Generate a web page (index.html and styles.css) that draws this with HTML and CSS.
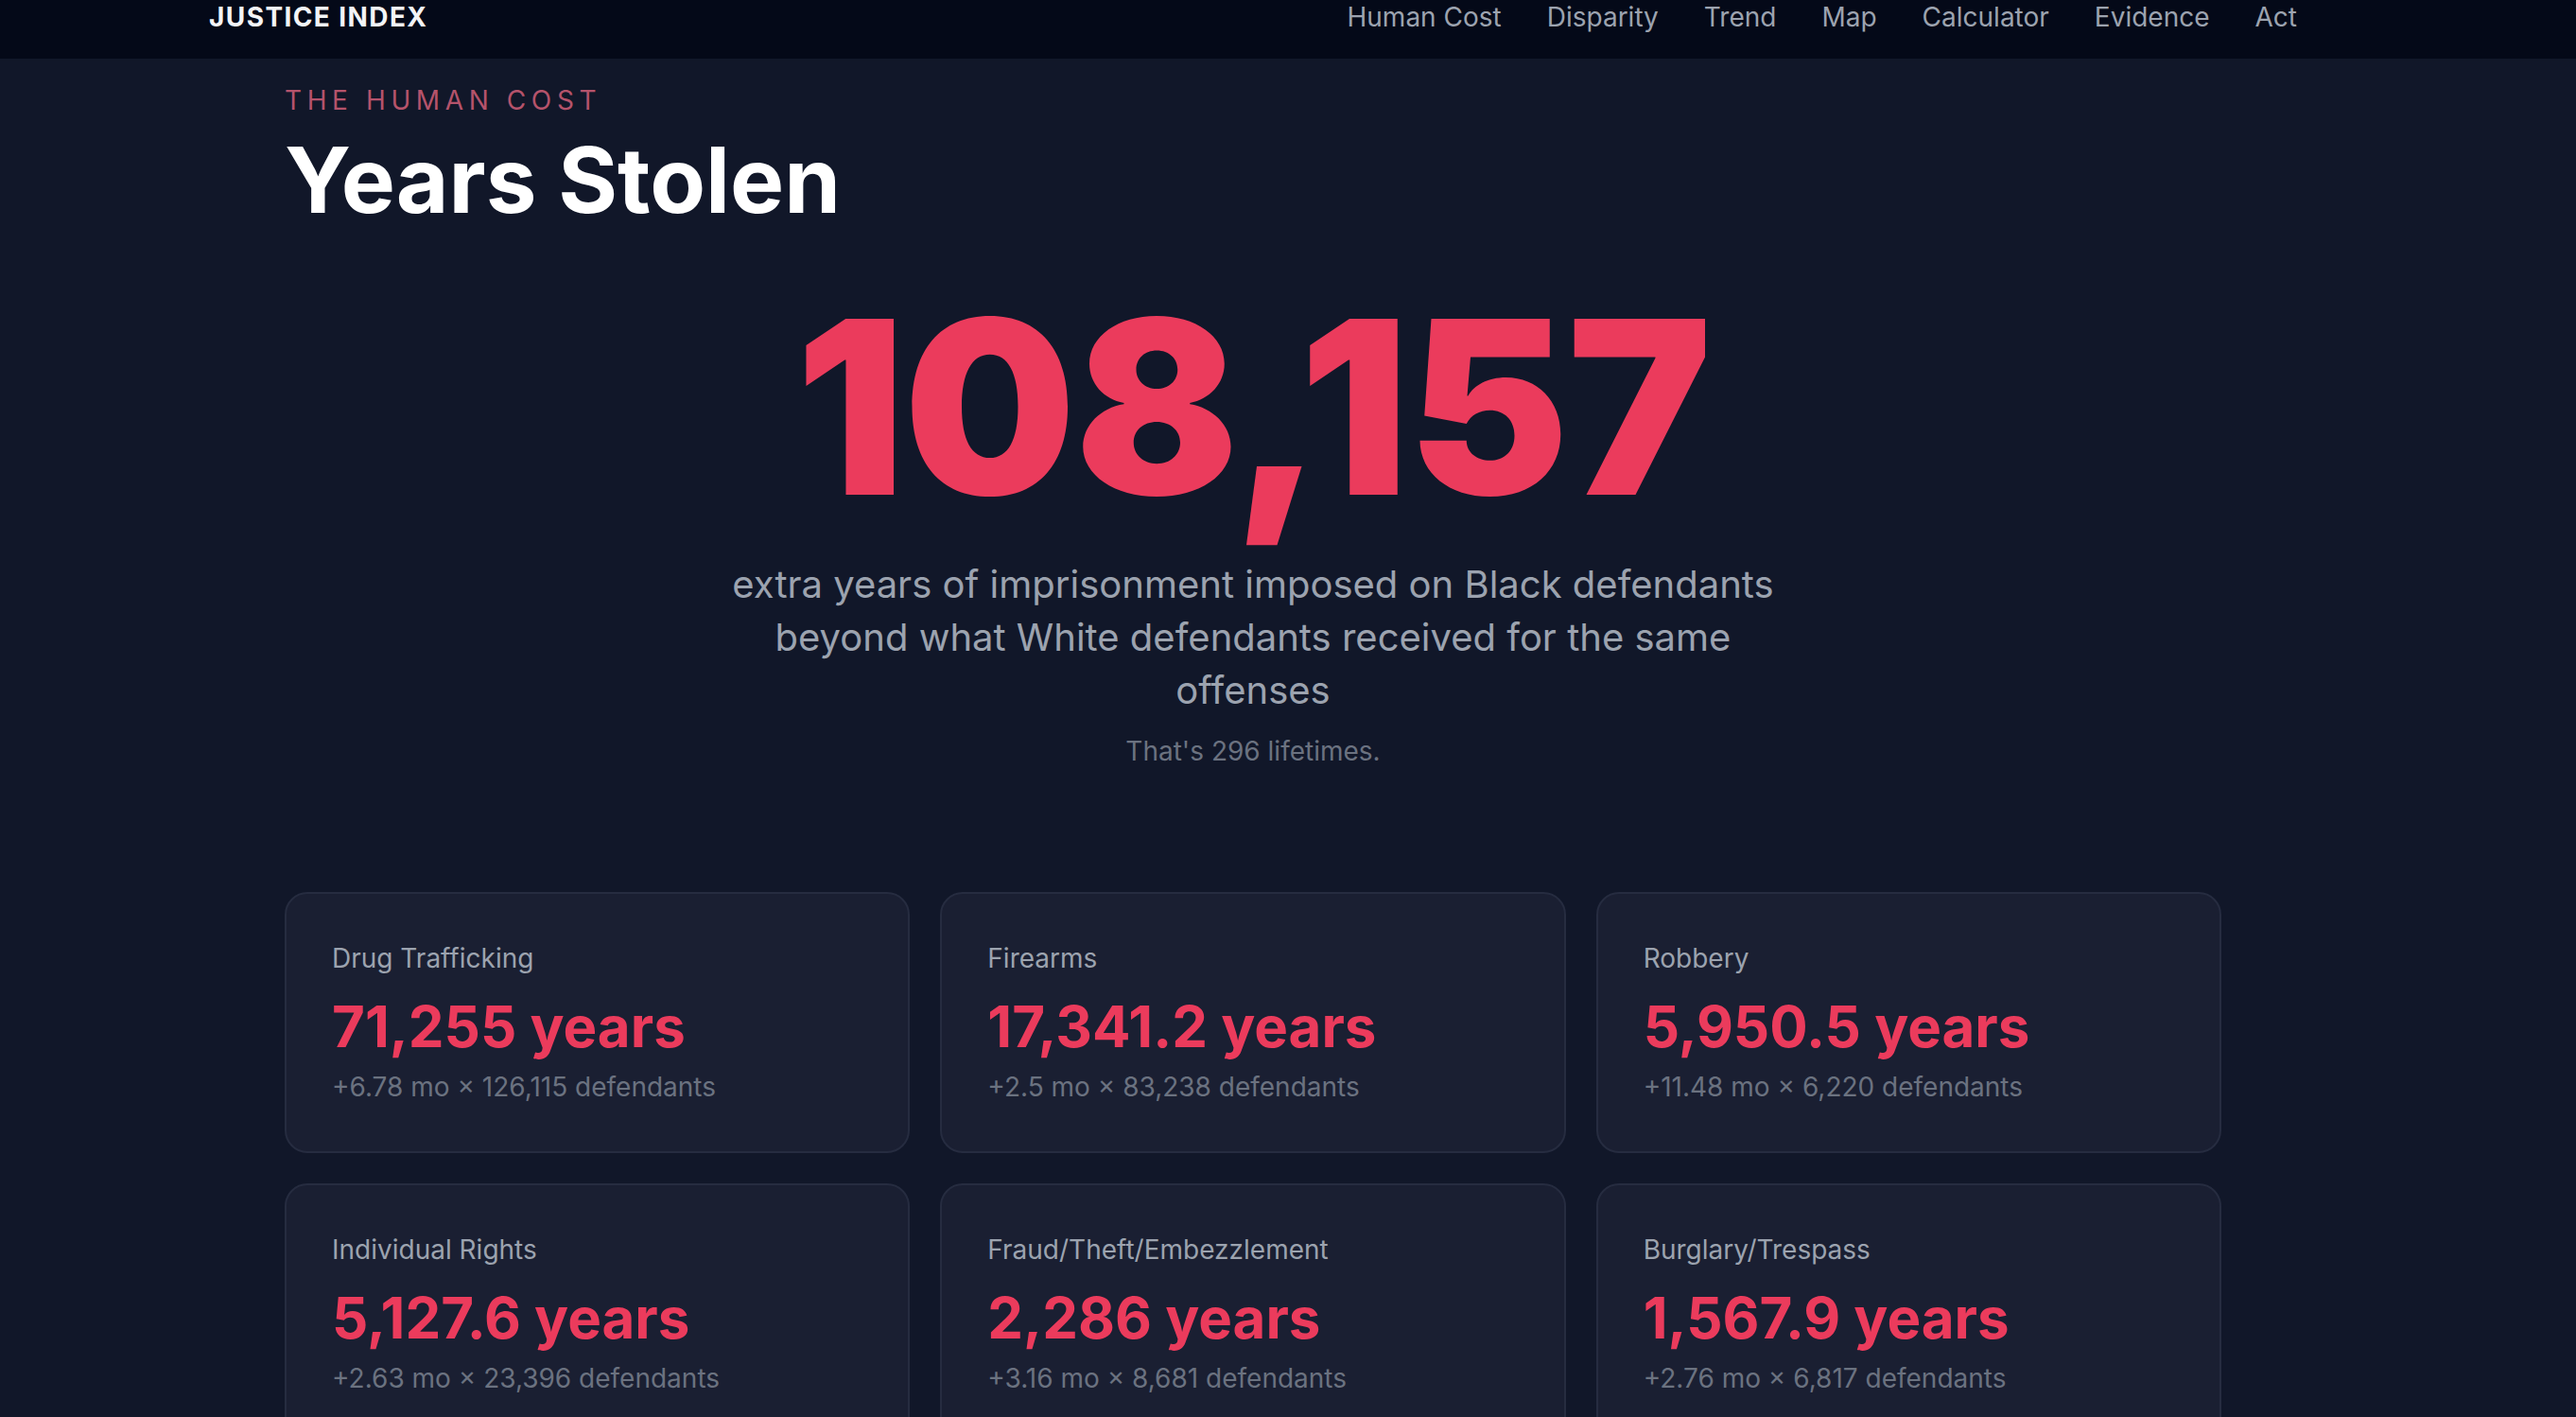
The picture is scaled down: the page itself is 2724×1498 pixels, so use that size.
FILE: index.html
```html
<!DOCTYPE html>
<html lang="en">
<head>
    <meta charset="UTF-8">
    <meta name="viewport" content="width=device-width, initial-scale=1.0">
    <title>Justice Index</title>
    <link rel="stylesheet" href="styles.css">
</head>
<body>
    <nav class="topnav">
        <div class="nav-inner">
            <a class="logo" href="#">JUSTICE INDEX</a>
            <div class="nav-links">
                <a href="#human-cost">Human Cost</a>
                <a href="#disparity">Disparity</a>
                <a href="#trend">Trend</a>
                <a href="#map">Map</a>
                <a href="#calculator">Calculator</a>
                <a href="#evidence">Evidence</a>
                <a href="#act">Act</a>
            </div>
        </div>
    </nav>

    <main class="page">
        <section class="section" id="human-cost">
            <p class="eyebrow">THE HUMAN COST</p>
            <h2 class="section-title">Years Stolen</h2>

            <div class="hero">
                <div class="hero-number">108,157</div>
                <p class="hero-desc">extra years of imprisonment imposed on Black defendants beyond what White defendants received for the same offenses</p>
                <p class="hero-note">That's 296 lifetimes.</p>
            </div>

            <div class="cards">
                <div class="card">
                    <div class="card-label">Drug Trafficking</div>
                    <div class="card-value">71,255 years</div>
                    <div class="card-sub">+6.78 mo × 126,115 defendants</div>
                </div>
                <div class="card">
                    <div class="card-label">Firearms</div>
                    <div class="card-value">17,341.2 years</div>
                    <div class="card-sub">+2.5 mo × 83,238 defendants</div>
                </div>
                <div class="card">
                    <div class="card-label">Robbery</div>
                    <div class="card-value">5,950.5 years</div>
                    <div class="card-sub">+11.48 mo × 6,220 defendants</div>
                </div>
                <div class="card">
                    <div class="card-label">Individual Rights</div>
                    <div class="card-value">5,127.6 years</div>
                    <div class="card-sub">+2.63 mo × 23,396 defendants</div>
                </div>
                <div class="card">
                    <div class="card-label">Fraud/Theft/Embezzlement</div>
                    <div class="card-value">2,286 years</div>
                    <div class="card-sub">+3.16 mo × 8,681 defendants</div>
                </div>
                <div class="card">
                    <div class="card-label">Burglary/Trespass</div>
                    <div class="card-value">1,567.9 years</div>
                    <div class="card-sub">+2.76 mo × 6,817 defendants</div>
                </div>
            </div>
        </section>
    </main>
</body>
</html>
```

FILE: styles.css
```css
body {
    margin: 0;
    background-color: #111729;
    color: #f3f4f6;
    font-family: Inter, "Noto Sans", sans-serif;
    overflow: hidden;
}
a {
    text-decoration: none;
    color: inherit;
}

.topnav {
    background-color: #040918;
    height: 62px;
    padding-right: 74px;
}
.nav-inner {
    box-sizing: border-box;
    max-width: 2304px;
    margin: 0 auto;
    padding: 0 48px;
    display: flex;
    justify-content: space-between;
    align-items: flex-start;
    font-size: 28px;
    line-height: 36px;
}
.logo {
    font-weight: 700;
    letter-spacing: 0.05em;
    color: #f3f4f6;
}
.nav-links {
    display: flex;
    gap: 48px;
}
.nav-links a {
    color: #9ca3af;
}

.page {
    display: block;
    padding-right: 74px;
}
.section {
    max-width: 2048px;
    margin: 0 auto;
    padding-top: 24px;
}
.eyebrow {
    margin: 0;
    font-size: 28px;
    line-height: 40px;
    letter-spacing: 0.2em;
    color: #b5536b;
}
.section-title {
    margin: 16px 0 0 0;
    font-size: 96px;
    line-height: 96px;
    font-weight: 700;
    color: #ffffff;
}

.hero {
    text-align: center;
    margin-top: 64px;
}
.hero-number {
    font-size: 256px;
    line-height: 256px;
    font-weight: 900;
    letter-spacing: -0.005em;
    color: #eb3b5c;
}
.hero-desc {
    max-width: 1152px;
    margin: 32px auto 0 auto;
    font-size: 40px;
    line-height: 56px;
    color: #9ca3af;
}
.hero-note {
    margin: 16px 0 0 0;
    font-size: 28px;
    line-height: 40px;
    color: #6b7280;
}

.cards {
    display: grid;
    grid-template-columns: repeat(3, 1fr);
    gap: 32px;
    margin-top: 129px;
}
.card {
    background-color: #1a1f32;
    border: 2px solid #262c40;
    border-radius: 24px;
    padding: 48px;
}
.card-label {
    font-size: 28px;
    line-height: 40px;
    color: #9ca3af;
}
.card-value {
    margin-top: 16px;
    font-size: 60px;
    line-height: 72px;
    font-weight: 700;
    color: #eb3b5c;
}
.card-sub {
    margin-top: 8px;
    font-size: 28px;
    line-height: 40px;
    color: #6b7280;
}
```
